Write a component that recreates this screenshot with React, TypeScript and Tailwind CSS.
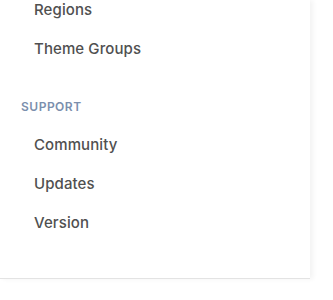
import React from "react";

const Item = ({ label }: { label: string }) => (
  <div className="h-[39px] flex items-center pl-[34px] text-[15px] font-medium text-[#505050] tracking-[0.1px]">
    {label}
  </div>
);

export default function App() {
  return (
    <div className="w-[333px] h-[300px] bg-white overflow-hidden" style={{ fontFamily: "Inter, 'Noto Sans', sans-serif" }}>
      <div className="w-[310px] h-[279px] bg-white border-b border-[#e3e3e3] shadow-[3px_0_5px_rgba(0,0,0,0.05)] flex flex-col">
        <div className="-mt-[9px]">
          <Item label="Regions" />
          <Item label="Theme Groups" />
        </div>
        <div className="mt-[28px] h-[20px] flex items-center pl-[21px] text-[12px] font-semibold text-[#7b8fad] tracking-[0.5px]">
          SUPPORT
        </div>
        <div className="mt-[9px]">
          <Item label="Community" />
          <Item label="Updates" />
          <Item label="Version" />
        </div>
      </div>
    </div>
  );
}
